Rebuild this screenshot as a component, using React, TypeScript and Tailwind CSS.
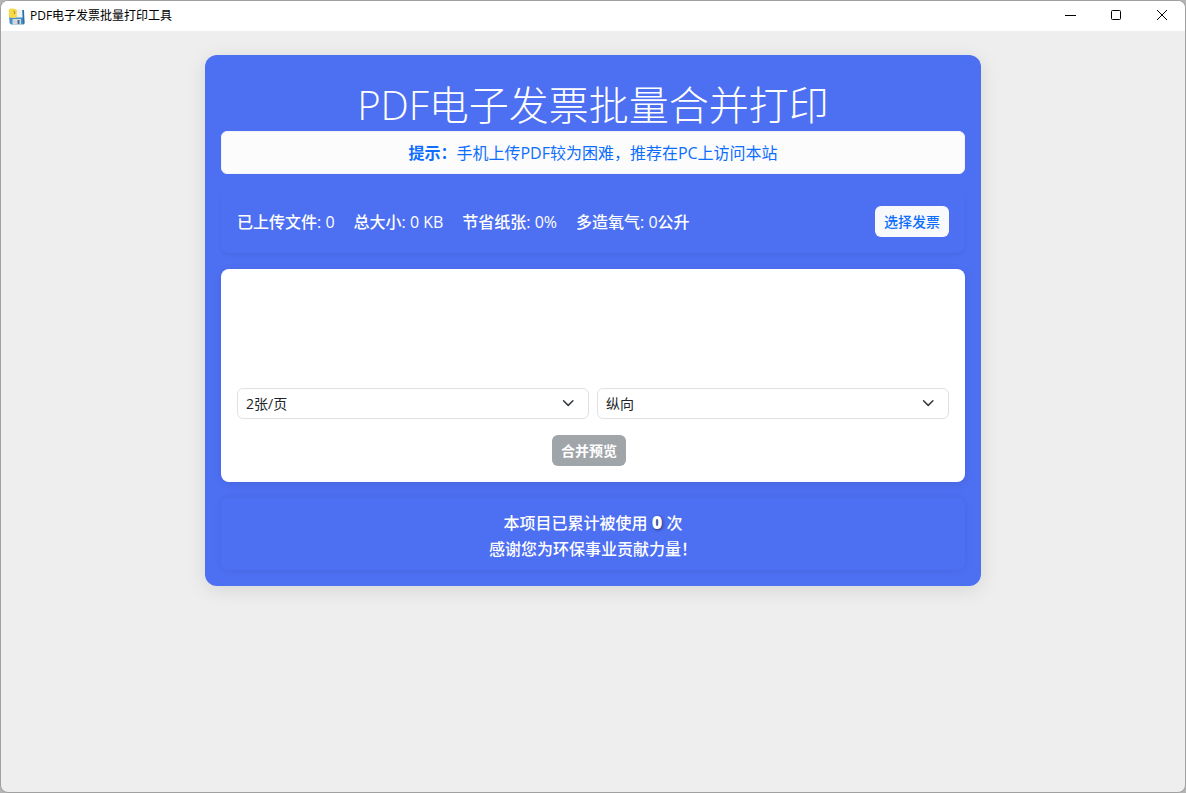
import { useState } from 'react';

const stats = [
  { label: '已上传文件', value: '0' },
  { label: '总大小', value: '0 KB' },
  { label: '节省纸张', value: '0%' },
  { label: '多造氧气', value: '0公升' },
];

function AppIcon() {
  return (
    <svg className="h-[17px] w-[17px]" viewBox="0 0 17 17" aria-hidden="true">
      <path d="M1 2.500h14.500l1 13.500-1 .5H3L1.500 15z" fill="#4a90c8" />
      <path d="M14 2h2l.5 13-1.500 1z" fill="#2f6ea5" />
      <path d="M6 1.500h8.200l.3 8H6z" fill="#eef2f5" />
      <path d="M4.500 11h8.500v5.500H4.500z" fill="#cfd8de" />
      <path d="M9.500 12h2v4h-2z" fill="#4a6f8e" />
      <path d="M0.800 1.500C2.500 0 6 .2 8 1.200l1.200 2-.7 2.300.7 3L6.500 10 2 9.800 0.800 8z" fill="#f7d94a" />
      <path d="M5.500 3l1.500 1.300-1 1.700" fill="none" stroke="#a07a14" />
    </svg>
  );
}

function TitleBar() {
  return (
    <header className="flex h-[30px] items-center justify-between bg-white pl-[7px]">
      <div className="flex items-center gap-[5px]">
        <AppIcon />
        <span className="text-xs text-black">PDF电子发票批量打印工具</span>
      </div>
      <div className="flex h-full">
        <button aria-label="最小化" className="flex w-[46px] items-center justify-center">
          <svg className="w-3 h-3" viewBox="0 0 12 12" fill="none" stroke="#000">
            <path d="M1 5.500h11" />
          </svg>
        </button>
        <button aria-label="最大化" className="flex w-[46px] items-center justify-center">
          <svg className="w-3 h-3" viewBox="0 0 12 12" fill="none" stroke="#000">
            <rect x="1.500" y="0.500" width="9" height="9" rx="1" />
          </svg>
        </button>
        <button aria-label="关闭" className="flex w-[46px] items-center justify-center">
          <svg className="w-3 h-3" viewBox="0 0 12 12" fill="none" stroke="#000">
            <path d="M1 0l10 10M11 0L1 10" />
          </svg>
        </button>
      </div>
    </header>
  );
}

interface SelectProps {
  label: string;
  options: string[];
}

function Select({ label, options }: SelectProps) {
  const [value, setValue] = useState(options[0]);

  return (
    <div className="relative flex-1">
      <select
        aria-label={label}
        value={value}
        onChange={(e) => setValue(e.target.value)}
        className="block h-[31px] w-full appearance-none rounded-md border border-[#dee2e6] bg-white px-2 text-sm text-[#212529]"
      >
        {options.map((option) => (
          <option key={option}>{option}</option>
        ))}
      </select>
      <svg
        className="pointer-events-none absolute right-3 top-2 h-3 w-4"
        viewBox="0 0 16 12"
        fill="none"
        stroke="#343a40"
        strokeWidth={1.5}
        strokeLinecap="round"
        strokeLinejoin="round"
      >
        <path d="M2.500 4.700l4.700 4.700 4.700-4.700" />
      </svg>
    </div>
  );
}

export default function App() {
  return (
    <div className="h-screen bg-[#b4b4b4] font-['Open_Sans','Noto_Sans_CJK_SC',sans-serif]">
      <div className="flex h-full flex-col overflow-hidden rounded-lg border border-[#a0a0a0] bg-[#eeeeee]">
        <TitleBar />

        <main className="px-4 pt-6">
          <div className="mx-auto max-w-[776px] rounded-xl bg-[#4d6ff1] px-4 pb-4 pt-6 shadow-[0_4px_20px_rgba(0,0,0,0.1)]">
            <h1 className="text-center text-[40px] font-light leading-[52px] text-white">
              PDF电子发票批量合并打印
            </h1>

            {/* Tip */}
            <div className="mb-4 rounded-md border border-[#f0f2f5] bg-[#fcfcfd] pb-[7px] pt-[9px] text-center text-base leading-[25px] text-[#0d6efd]">
              <strong className="font-bold">提示：</strong>手机上传PDF较为困难，推荐在PC上访问本站
            </div>

            {/* Stats */}
            <div className="mb-4 flex items-center justify-between rounded-lg p-4 shadow-[0_2px_4px_rgba(0,0,0,0.05)]">
              <div className="flex gap-[19px] text-base font-medium text-white">
                {stats.map((item) => (
                  <span key={item.label}>
                    {item.label}: {item.value}
                  </span>
                ))}
              </div>
              <button className="h-[31px] rounded-md bg-[#f8f9fa] px-[9px] text-sm font-medium text-[#0d6efd]">
                选择发票
              </button>
            </div>

            {/* Merge options */}
            <div className="mb-4 rounded-lg bg-white px-4 pb-4 shadow-[0_2px_8px_rgba(0,0,0,0.08)]">
              <div className="h-[119px]" />
              <div className="mb-4 flex gap-2">
                <Select label="每页张数" options={['2张/页', '1张/页', '4张/页']} />
                <Select label="纸张方向" options={['纵向', '横向']} />
              </div>
              <div className="flex justify-center pr-2">
                <button
                  disabled
                  className="h-[31px] rounded-md bg-[#a0a5aa] px-[9px] text-sm font-bold text-white"
                >
                  合并预览
                </button>
              </div>
            </div>

            <footer className="rounded-lg pb-2 pt-3 text-center text-base font-medium leading-[26px] text-white shadow-[0_0_8px_rgba(0,0,0,0.07)]">
              <p>
                本项目已累计被使用{' '}
                <strong className="text-lg font-extrabold leading-none [text-shadow:1px_1px_3px_rgba(0,0,0,0.5)]">0</strong> 次
              </p>
              <p>感谢您为环保事业贡献力量！</p>
            </footer>
          </div>
        </main>
      </div>
    </div>
  );
}
